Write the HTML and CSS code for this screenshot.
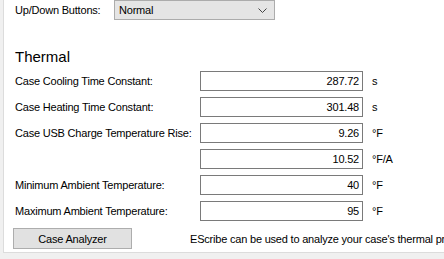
FILE: index.html
```html
<!DOCTYPE html>
<html>
<head>
  <meta charset="UTF-8" />
  <title>Settings - Thermal</title>
  <link rel="stylesheet" href="styles.css">
</head>
<body>
  <div class="panel">

    <!-- Up/Down buttons mode -->
    <div class="top-row">
      <span class="label">Up/Down Buttons:</span>
      <div class="combo">
        <span>Normal</span>
        <svg class="chev" width="9" height="5" viewBox="0 0 9 5">
          <polyline points="0.5,0.5 4.5,4.5 8.5,0.5" fill="none" stroke="#444" stroke-width="1"/>
        </svg>
      </div>
    </div>

    <h2 class="section">Thermal</h2>

    <div class="rows">
      <div class="row">
        <span class="label">Case Cooling Time Constant:</span>
        <div class="box">287.72</div>
        <span class="unit">s</span>
      </div>
      <div class="row">
        <span class="label">Case Heating Time Constant:</span>
        <div class="box">301.48</div>
        <span class="unit">s</span>
      </div>
      <div class="row">
        <span class="label">Case USB Charge Temperature Rise:</span>
        <div class="box">9.26</div>
        <span class="unit">°F</span>
      </div>
      <div class="row">
        <span class="label"></span>
        <div class="box">10.52</div>
        <span class="unit">°F/A</span>
      </div>
      <div class="row">
        <span class="label">Minimum Ambient Temperature:</span>
        <div class="box">40</div>
        <span class="unit">°F</span>
      </div>
      <div class="row">
        <span class="label">Maximum Ambient Temperature:</span>
        <div class="box">95</div>
        <span class="unit">°F</span>
      </div>
    </div>

    <div class="bottom-row">
      <button class="btn">Case Analyzer</button>
      <span class="note">EScribe can be used to analyze your case's thermal properties.</span>
    </div>

  </div>
</body>
</html>
```

FILE: styles.css
```css
body {
  font-family: "Liberation Sans", Arial, sans-serif;
  font-size: 11px;
  letter-spacing: -0.2px;
  color: #000;
  margin: 0;
  padding: 0;
  background: #f0f0f0;
  overflow: hidden;
}
.panel {
  margin-left: 3px;
  height: 253px;
  background: #fff;
  border-left: 1px solid #dcdcdc;
  border-bottom: 1px solid #dcdcdc;
  padding-left: 11px;
  box-sizing: border-box;
  overflow: hidden;
  white-space: nowrap;
}
.top-row {
  display: flex;
  align-items: center;
  height: 20px;
}
.top-row .label {
  width: 99px;
  flex-shrink: 0;
}
.combo {
  width: 161px;
  height: 20px;
  box-sizing: border-box;
  background: #e5e5e5;
  border: 1px solid #acacac;
  display: flex;
  align-items: center;
  justify-content: space-between;
  padding: 0 7px 0 4px;
}
.chev {
  display: block;
}
.section {
  font-size: 15px;
  font-weight: normal;
  letter-spacing: 0;
  margin: 28px 0 5px;
  line-height: 18px;
}
.rows {
  display: flex;
  flex-direction: column;
  gap: 6px;
}
.row {
  display: flex;
  align-items: center;
  height: 20px;
}
.row .label {
  width: 185px;
  flex-shrink: 0;
}
.box {
  width: 163px;
  height: 20px;
  flex-shrink: 0;
  box-sizing: border-box;
  border: 1px solid #7a7a7a;
  text-align: right;
  padding: 0 3px;
  line-height: 18px;
}
.unit {
  margin-left: 9px;
}
.bottom-row {
  display: flex;
  align-items: center;
  margin-top: 7px;
}
.btn {
  font-family: inherit;
  font-size: 11px;
  letter-spacing: -0.2px;
  width: 119px;
  height: 21px;
  flex-shrink: 0;
  margin-left: -2px;
  background: #e1e1e1;
  border: 1px solid #adadad;
  padding: 0;
  color: #000;
}
.note {
  margin-left: 58px;
}
```
